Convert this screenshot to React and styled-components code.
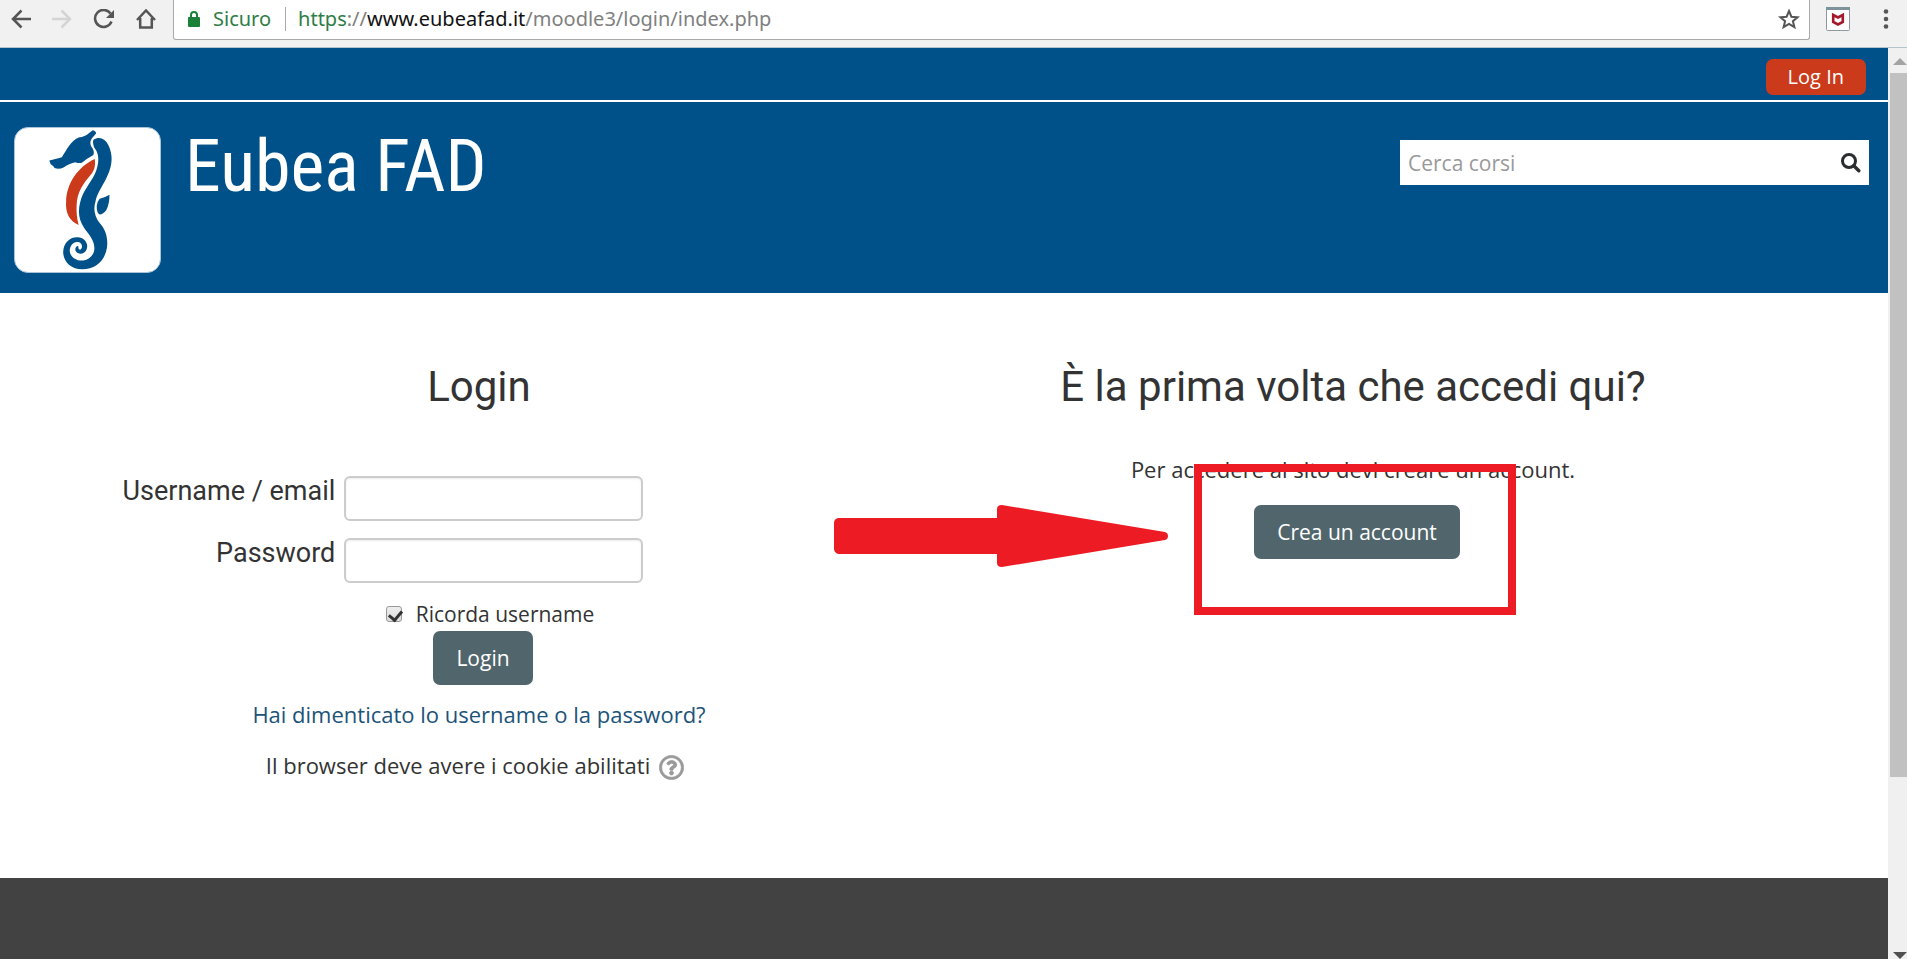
import React, { useState } from 'react';
import styled, { createGlobalStyle } from 'styled-components';
import { FaRegQuestionCircle } from 'react-icons/fa';

const App = () => {
  const [form, setForm] = useState({
    username: '',
    password: '',
    remember: true,
  });

  const handleChange = ({ target: { name, value, type, checked } }) => {
    setForm((prev) => ({
      ...prev,
      [name]: type === 'checkbox' ? checked : value,
    }));
  };

  return (
    <Browser>
      <GlobalStyle />
      <BrowserBar />
      <Viewport>
        <Page>
          <TopBar>
            <LogInLink href="#login">Log In</LogInLink>
          </TopBar>
          <Header>
            <Brand>
              <SeahorseLogo />
              <SiteName>Eubea FAD</SiteName>
            </Brand>
            <SearchForm onSubmit={(e) => e.preventDefault()}>
              <SearchInput
                type="text"
                aria-label="Cerca corsi"
                placeholder="Cerca corsi"
              />
              <SearchButton type="submit" aria-label="Cerca">
                <svg width="20" height="20" viewBox="0 0 20 20" fill="none">
                  <circle cx="8" cy="8" r="6.5" stroke="#2b2e2f" strokeWidth="3" />
                  <path
                    d="M12.8 12.8 17.8 17.8"
                    stroke="#2b2e2f"
                    strokeWidth="3.4"
                    strokeLinecap="round"
                  />
                </svg>
              </SearchButton>
            </SearchForm>
          </Header>
          <Main>
            <section>
              <Heading>Login</Heading>
              <LoginForm id="login" onSubmit={(e) => e.preventDefault()}>
                <Label htmlFor="username">Username / email</Label>
                <TextBox
                  type="text"
                  id="username"
                  name="username"
                  value={form.username}
                  onChange={handleChange}
                />
                <Label htmlFor="password">Password</Label>
                <TextBox
                  type="password"
                  id="password"
                  name="password"
                  value={form.password}
                  onChange={handleChange}
                />
                <FormFooter>
                  <Remember>
                    <Checkbox
                      type="checkbox"
                      name="remember"
                      checked={form.remember}
                      onChange={handleChange}
                    />
                    Ricorda username
                  </Remember>
                  <Button type="submit">Login</Button>
                </FormFooter>
              </LoginForm>
              <ForgotText>
                <a href="#forgot">Hai dimenticato lo username o la password?</a>
              </ForgotText>
              <CookieText>
                Il browser deve avere i cookie abilitati
                <HelpButton type="button" aria-label="Aiuto">
                  <FaRegQuestionCircle />
                </HelpButton>
              </CookieText>
            </section>
            <SignUp>
              <Heading>È la prima volta che accedi qui?</Heading>
              <SignUpText>Per accedere al sito devi creare un account.</SignUpText>
              <SignUpAction>
                <Button type="button">Crea un account</Button>
              </SignUpAction>
              <Arrow viewBox="0 0 334 62" aria-hidden="true">
                <path d="M4 13H163V4Q163 0 168 0L331 27Q334 28 334 31T331 35L168 62Q163 62 163 58V49H4Q0 47 0 44V18Q0 14 4 13Z" />
              </Arrow>
              <Highlight />
            </SignUp>
          </Main>
          <Footer />
        </Page>
        <ScrollBar>
          <ScrollArrow viewBox="0 0 14 7">
            <path d="M7 0 14 7H0Z" fill="#a3a3a3" />
          </ScrollArrow>
          <ScrollThumb />
          <ScrollArrow viewBox="0 0 14 7">
            <path d="M0 0H14L7 7Z" fill="#505050" />
          </ScrollArrow>
        </ScrollBar>
      </Viewport>
    </Browser>
  );
};

export default App;

const BrowserBar = () => (
  <Toolbar>
    <NavButtons>
      <IconButton type="button" aria-label="Indietro">
        <svg width="20" height="20" viewBox="0 0 20 20">
          <path d="M20 10H2M10.5 1.5 2 10l8.5 8.5" />
        </svg>
      </IconButton>
      <IconButton type="button" aria-label="Avanti" disabled>
        <svg width="20" height="20" viewBox="0 0 20 20">
          <path d="M0 10H18M9.5 1.5 18 10l-8.5 8.5" />
        </svg>
      </IconButton>
      <IconButton type="button" aria-label="Ricarica">
        <svg width="22" height="20" viewBox="0 0 22 20">
          <path d="M17.5 4.5A8.5 8.5 0 1 0 18.5 12.5" />
          <path d="M21 1V9H13Z" fill="#555" stroke="none" />
        </svg>
      </IconButton>
      <IconButton type="button" aria-label="Pagina iniziale">
        <svg width="20" height="20" viewBox="0 0 20 20">
          <path d="M1 11 10 1.5 19 11M4.2 9V18.5H15.8V9" />
        </svg>
      </IconButton>
    </NavButtons>
    <AddressBar>
      <svg width="12" height="16" viewBox="0 0 12 16">
        <path d="M3 7V4Q3 1 6 1T9 4V7" fill="none" stroke="#1b8038" strokeWidth="2" />
        <rect y="6" width="12" height="10" rx="1" fill="#1b8038" />
      </svg>
      <Secure>Sicuro</Secure>
      <Url>
        <Scheme>https</Scheme>://<Host>www.eubeafad.it</Host>/moodle3/login/index.php
      </Url>
      <IconButton type="button" aria-label="Aggiungi ai preferiti">
        <svg width="22" height="22" viewBox="0 0 22 22">
          <path
            d="m11 3 2.400 5.700 6.200.5-4.700 4 1.500 6-5.400-3.200-5.400 3.200 1.500-6-4.700-4 6.200-.5Z"
            strokeWidth="2"
          />
        </svg>
      </IconButton>
    </AddressBar>
    <Extensions>
      <IconButton type="button" aria-label="McAfee">
        <svg width="24" height="24" viewBox="0 0 24 24">
          <rect x=".5" y=".5" width="23" height="23" rx="1" fill="#fdfdfd" stroke="#8d999f" strokeWidth="1" />
          <path d="M0 0H24V3H0Z" fill="#7e929c" stroke="none" />
          <path d="M7.2 8 12 10.5 16.8 8V15L12 17.5 7.2 15Z" stroke="#a3182a" strokeWidth="2.6" />
        </svg>
      </IconButton>
      <IconButton type="button" aria-label="Menu">
        <svg width="6" height="20" viewBox="0 0 6 20">
          <g fill="#555" stroke="none">
            <circle cx="3" cy="2.5" r="2.3" />
            <circle cx="3" cy="10" r="2.3" />
            <circle cx="3" cy="17.5" r="2.3" />
          </g>
        </svg>
      </IconButton>
    </Extensions>
  </Toolbar>
);

const SeahorseLogo = () => (
  <Logo viewBox="44 112 438 438" role="img" aria-label="Eubea">
    <g fill="#005189">
      {/* head */}
      <path d="M147 211Q165 207 185 201C200 178 212 151 236 141Q256 138 268 127L279 119Q289 121 289 129L276 144Q268 157 275 169Q285 181 281 194Q262 204 247 217Q238 221 226 216Q210 219 190 232Q177 238 163 234Q160 226 151 222Z" />
      {/* body and curled tail */}
      <path d="M281 148C300 136 317 145 327 165C341 195 339 224 323 259C309 290 292 309 287 337C280 359 285 383 300 401C320 423 326 451 322 477C315 517 287 542 247 542C213 542 189 518 189 489C190 462 208 443 233 444C254 445 266 462 261 479C256 495 237 499 228 488C223 480 228 470 235 471Q234 483 241 482C250 477 247 462 236 459C219 456 209 471 209 486C211 506 230 517 250 515C270 512 284 497 284 478C284 452 267 436 253 416C235 391 234 362 241 337C248 306 271 281 285 253C299 219 298 198 290 181Q276 164 281 148Z" />
      {/* fin */}
      <path d="M330 315Q330 343 320 362Q311 374 300 375Q291 371 291 350Q292 336 300 327Q317 323 330 315Z" />
    </g>
    <path
      d="M285 206C288 222 285 239 274 253C248 284 231 309 230 347Q228 379 236 407C208 395 195 370 198 335C199 283 232 230 285 206Z"
      fill="#cb3a1a"
    />
  </Logo>
);

const GlobalStyle = createGlobalStyle`
  * {
    box-sizing: border-box;
  }
  body {
    margin: 0;
    background: #fff;
    color: #333;
    font-family: 'Open Sans', sans-serif;
    font-size: 22px;
    line-height: 30px;
  }
  button,
  input {
    font: inherit;
  }
`;

const Browser = styled.div`
  min-height: 100vh;
  display: flex;
  flex-direction: column;
`;

const Toolbar = styled.div`
  display: flex;
  align-items: flex-start;
  height: 48px;
  background: #f1f1f1;
  border-bottom: 1px solid #b4c3cc;
`;

const NavButtons = styled.div`
  display: flex;
  align-items: center;
  gap: 21px;
  height: 38px;
  padding: 0 17px 0 11px;
`;

const IconButton = styled.button`
  display: flex;
  padding: 0;
  border: 0;
  background: none;
  cursor: pointer;
  svg {
    fill: none;
    stroke: #555;
    stroke-width: 2.5;
  }
  &:disabled svg {
    stroke: #d4d4d4;
  }
`;

const AddressBar = styled.div`
  flex: 1;
  display: flex;
  align-items: center;
  height: 40px;
  padding: 0 9px 2px 14px;
  background: #fff;
  border: 1px solid #a9a9a9;
  border-top: 0;
  border-radius: 0 0 3px 3px;
  font-family: 'Noto Sans', sans-serif;
  font-size: 20px;
`;

const Secure = styled.span`
  margin-left: 13px;
  padding-right: 14px;
  border-right: 1px solid #a9a9a9;
  line-height: 24px;
  color: #2f7d46;
`;

const Url = styled.span`
  flex: 1;
  margin-left: 12px;
  color: #808080;
`;

const Scheme = styled.span`
  color: #2f7d46;
`;

const Host = styled.span`
  color: #111;
`;

const Extensions = styled.div`
  display: flex;
  align-items: center;
  gap: 33px;
  height: 38px;
  padding: 0 18px 0 16px;
`;

const Viewport = styled.div`
  flex: 1;
  display: flex;
`;

const Page = styled.div`
  flex: 1;
  display: flex;
  flex-direction: column;
`;

const TopBar = styled.div`
  display: flex;
  justify-content: flex-end;
  padding: 11px 22px 5px;
  background: #005189;
  border-bottom: 2px solid #fff;
`;

const LogInLink = styled.a`
  padding: 3px 22px;
  background: #cb3a1a;
  border-radius: 7px;
  color: #fff;
  font-size: 20px;
  text-decoration: none;
`;

const Header = styled.header`
  display: flex;
  justify-content: space-between;
  align-items: flex-start;
  padding: 25px 19px 20px 14px;
  background: #005189;
`;

const Brand = styled.div`
  display: flex;
  gap: 24px;
`;

const Logo = styled.svg`
  width: 147px;
  height: 146px;
  background: #fff;
  border: 1px solid #a9c3d8;
  border-radius: 14px;
`;

const SiteName = styled.h1`
  margin: 0;
  color: #fff;
  font-family: 'Roboto Condensed', Roboto, sans-serif;
  font-size: 72px;
  font-weight: 400;
  line-height: 80px;
`;

const SearchForm = styled.form`
  display: flex;
  width: 469px;
  margin-top: 13px;
  background: #fff;
`;

const SearchInput = styled.input`
  flex: 1;
  min-width: 0;
  height: 45px;
  padding: 0 8px;
  border: 0;
  background: none;
  font-size: 21px;
  &::placeholder {
    color: #999;
  }
`;

const SearchButton = styled.button`
  display: flex;
  align-items: center;
  padding: 0 8px;
  border: 0;
  background: none;
  cursor: pointer;
`;

const Main = styled.main`
  display: grid;
  grid-template-columns: 1fr 1fr;
  padding: 66px 98px 98px 42px;
`;

const Heading = styled.h2`
  margin: 0;
  font-family: Roboto, sans-serif;
  font-size: 42px;
  font-weight: 400;
  line-height: 56px;
  text-align: center;
`;

const LoginForm = styled.form`
  display: grid;
  grid-template-columns: 293fr 571fr;
  column-gap: 9px;
  row-gap: 17px;
  margin-top: 61px;
`;

const Label = styled.label`
  font-family: Roboto, sans-serif;
  font-size: 27px;
  text-align: right;
`;

const TextBox = styled.input`
  width: 299px;
  height: 45px;
  padding: 4px 8px;
  border: 2px solid #ccc;
  border-radius: 6px;
  box-shadow: inset 0 1px 2px rgba(0, 0, 0, 0.08);
`;

const FormFooter = styled.div`
  grid-column: 1 / -1;
  display: flex;
  flex-direction: column;
  align-items: center;
  gap: 3px;
  padding-left: 8px;
`;

const Remember = styled.label`
  display: flex;
  align-items: center;
  gap: 14px;
  padding-left: 14px;
  font-size: 21px;
  line-height: 28px;
`;

const Checkbox = styled.input`
  appearance: none;
  width: 16px;
  height: 16px;
  margin: 0;
  border: 1px solid #999;
  border-radius: 3px;
  background: linear-gradient(#eee, #ddd);
  &:checked::before {
    content: '';
    display: block;
    width: 6px;
    height: 10px;
    margin: 1px 0 0 4px;
    border: solid #333;
    border-width: 0 3px 3px 0;
    transform: rotate(40deg);
  }
`;

const Button = styled.button`
  padding: 12px 23px;
  border: 0;
  border-radius: 7px;
  background: #51666c;
  color: #fff;
  font-size: 21px;
  cursor: pointer;
`;

const ForgotText = styled.p`
  margin: 14px 0 0;
  text-align: center;
  a {
    color: #1c5379;
    text-decoration: none;
  }
`;

const CookieText = styled.p`
  display: flex;
  justify-content: center;
  gap: 9px;
  margin: 21px 0 0;
  padding-right: 8px;
`;

const HelpButton = styled.button`
  display: flex;
  align-items: flex-end;
  padding: 0;
  border: 0;
  background: none;
  color: #999;
  font-size: 25px;
  cursor: pointer;
  path {
    stroke: currentColor;
    stroke-width: 14;
  }
`;

const SignUp = styled.section`
  position: relative;
  text-align: center;
`;

const SignUpText = styled.p`
  margin: 39px 0 21px;
`;

const SignUpAction = styled.div`
  padding-left: 8px;
`;

/* annotations drawn over the page */
const Arrow = styled.svg`
  position: absolute;
  top: 146px;
  left: calc(50% - 519px);
  width: 334px;
  height: 62px;
  fill: #ed1c24;
`;

const Highlight = styled.div`
  position: absolute;
  top: 105px;
  left: calc(50% - 159px);
  width: 322px;
  height: 151px;
  border: 8px solid #ed1c24;
  pointer-events: none;
`;

const Footer = styled.footer`
  flex: 1;
  min-height: 81px;
  background: #424242;
`;

const ScrollBar = styled.div`
  display: flex;
  flex-direction: column;
  align-items: flex-end;
  width: 19px;
  padding-top: 10px;
  background: #f0f0f0;
`;

const ScrollThumb = styled.div`
  flex: 1;
  width: 17px;
  max-height: 704px;
  margin: 8px 0 auto;
  background: #c1c1c1;
`;

const ScrollArrow = styled.svg`
  width: 14px;
  height: 7px;
`;
